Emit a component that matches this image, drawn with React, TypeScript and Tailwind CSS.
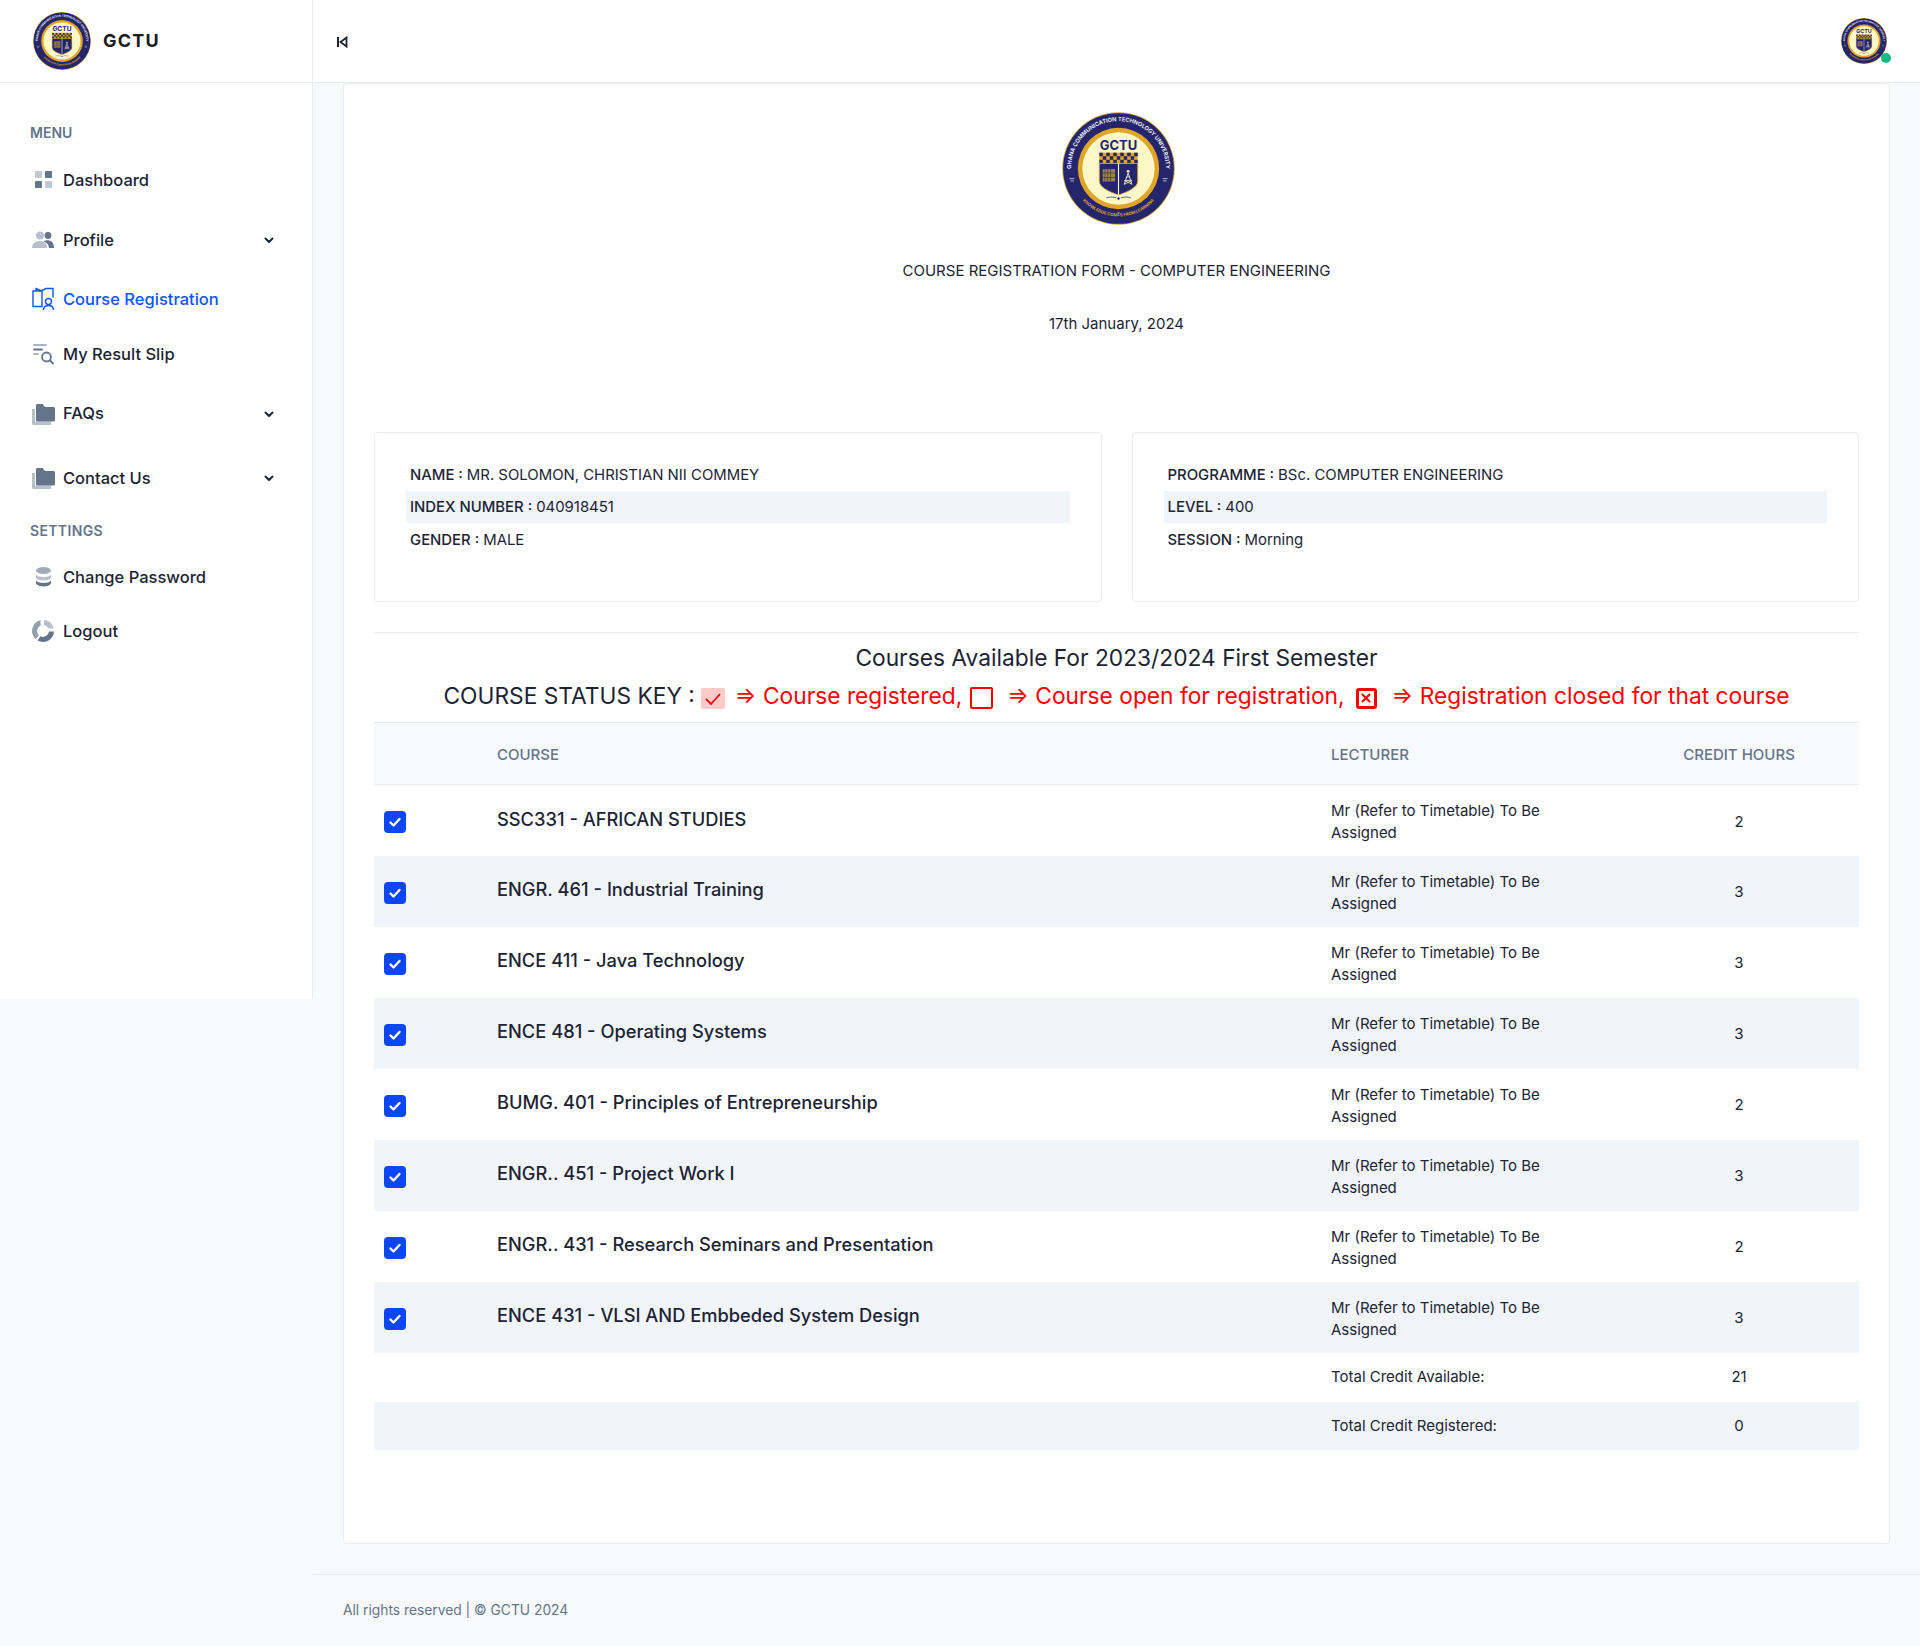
import React, { useId } from 'react';

const courses = [
  { name: 'SSC331 - AFRICAN STUDIES', credit: 2 },
  { name: 'ENGR. 461 - Industrial Training', credit: 3 },
  { name: 'ENCE 411 - Java Technology', credit: 3 },
  { name: 'ENCE 481 - Operating Systems', credit: 3 },
  { name: 'BUMG. 401 - Principles of Entrepreneurship', credit: 2 },
  { name: 'ENGR.. 451 - Project Work I', credit: 3 },
  { name: 'ENGR.. 431 - Research Seminars and Presentation', credit: 2 },
  { name: 'ENCE 431 - VLSI AND Embbeded System Design', credit: 3 },
];

const Seal: React.FC<{ className?: string }> = ({ className }) => {
  const id = useId();
  return (
    <svg viewBox="0 0 200 200" className={className}>
      <circle cx="100" cy="100" r="99.500" fill="#c9a23a" />
      <circle cx="100" cy="100" r="98" fill="#24256b" />
      <circle cx="100" cy="100" r="72" fill="#e0a526" />
      <circle cx="100" cy="100" r="64" fill="#fdf8c8" />
      <defs>
        <path id={`${id}top`} d="M 24 136 A 84 84 0 1 1 176 136" />
        <path id={`${id}bot`} d="M 38 158 A 85 85 0 0 0 162 158" />
      </defs>
      <text fill="#fff" fontSize="10" fontFamily="Inter, sans-serif" fontWeight="600">
        <textPath href={`#${id}top`} startOffset="50%" textAnchor="middle">
          GHANA COMMUNICATION TECHNOLOGY UNIVERSITY
        </textPath>
      </text>
      <text fill="#e0a526" fontSize="7.500" fontFamily="Inter, sans-serif" fontWeight="700">
        <textPath href={`#${id}bot`} startOffset="50%" textAnchor="middle">
          KNOWLEDGE COMES FROM LEARNING
        </textPath>
      </text>
      <path d="M13 118 h9 M178 118 h9 M15 122 h6 M179 122 h6" stroke="#fff" strokeWidth="1.500" opacity="0.8" />
      <text x="100" y="67" textAnchor="middle" fill="#24256b" fontSize="23" fontFamily="Inter, sans-serif" fontWeight="700">
        GCTU
      </text>
      <rect x="66" y="72" width="68" height="19" fill="#e0a526" />
      {[0, 1, 2].map((r) =>
        Array.from({ length: 11 }).map((_, c) =>
          (r + c) % 2 === 0 ? <rect key={`${r}-${c}`} x={66 + c * 6.18} y={72 + r * 6.33} width="6.180" height="6.330" fill="#24256b" /> : null
        )
      )}
      <path d="M66 91 H134 V122 C134 134 116 141 100 147 C84 141 66 134 66 122 Z" fill="#24256b" stroke="#e0a526" strokeWidth="1.500" />
      <path d="M100 91 V147" stroke="#fdf8c8" strokeWidth="2" />
      <rect x="72" y="101" width="22" height="22" fill="#c9a23a" opacity="0.75" />
      <path d="M76 101 V123 M81 101 V123 M86 101 V123 M72 108 H94 M72 116 H94" stroke="#24256b" strokeWidth="1" />
      <path d="M117 108 L110 128 M117 108 L124 128 M112.500 121 H121.500 M114.500 115 H119.500 M110 128 L124 121 M124 128 L110 121" stroke="#fdf8c8" strokeWidth="1.500" fill="none" />
      <circle cx="117" cy="105" r="2.500" fill="#fdf8c8" />
      <path d="M78 152 C84 150 90 150 96 152 M104 152 C110 150 116 150 122 152" stroke="#24256b" strokeWidth="1.200" fill="none" />
      <circle cx="100" cy="153" r="2.200" fill="#24256b" />
    </svg>
  );
};

const DashIcon = () => (
  <svg viewBox="0 0 24 24" className="h-6 w-6">
    <rect x="4" y="3" width="7" height="7" rx="0.800" fill="#64748b" opacity="0.4" />
    <rect x="14" y="3" width="7" height="7" rx="0.800" fill="#64748b" />
    <rect x="4" y="13" width="7" height="7" rx="0.800" fill="#64748b" />
    <rect x="14" y="13" width="7" height="7" rx="0.800" fill="#64748b" opacity="0.4" />
  </svg>
);

const PeopleIcon = () => (
  <svg viewBox="0 0 24 24" className="h-6 w-6">
    <circle cx="9" cy="7.500" r="4" fill="#64748b" opacity="0.45" />
    <path d="M1 20c0-4.500 3.500-7 8-7s7 2.500 7 7z" fill="#64748b" opacity="0.45" />
    <circle cx="17" cy="7.500" r="3.400" fill="#64748b" />
    <path d="M12.500 13.200c1.200-.7 2.800-1 4.400-1 3.800 0 6.100 3 6.100 7.800h-5c0-2.800-2-5.500-5.500-6.800z" fill="#64748b" />
  </svg>
);

const BookUserIcon = () => (
  <svg viewBox="0 0 24 24" className="h-6 w-6" fill="none" stroke="#0d55f5" strokeWidth="1.400">
    <path d="M2 4h9v15.500H2z" />
    <path d="M5 4V1.500l6 2.500" />
    <path d="M11 3.500l4-2h7v9" />
    <circle cx="17.500" cy="14.500" r="3" />
    <path d="M12.500 23c0-3 2-4.500 5-4.500s5 1.500 5 4.500" />
  </svg>
);

const SearchListIcon = () => (
  <svg viewBox="0 0 24 24" className="h-6 w-6" fill="none" stroke="#64748b" strokeWidth="1.800" strokeLinecap="round">
    <path d="M3 3h12" opacity="0.55" />
    <path d="M3 7.500h8" />
    <path d="M3 12h4" opacity="0.55" />
    <circle cx="15.500" cy="15" r="4.500" />
    <path d="M19 18.500l3 3" />
  </svg>
);

const FolderIcon = () => (
  <svg viewBox="0 0 24 24" className="h-6 w-6">
    <path d="M1 7h3v12.500h16V23H2.500C1.700 23 1 22.300 1 21.500z" fill="#64748b" opacity="0.45" />
    <path d="M5 3.500C5 2.700 5.700 2 6.500 2h5l2.500 3h8.500c.8 0 1.500.7 1.500 1.500V18c0 .8-.7 1.500-1.500 1.500h-16C5.700 19.500 5 18.800 5 18z" fill="#64748b" />
  </svg>
);

const StackIcon = () => (
  <svg viewBox="0 0 24 24" className="h-6 w-6">
    <ellipse cx="12.500" cy="5.500" rx="7.500" ry="3.500" fill="#64748b" opacity="0.6" />
    <path d="M5 9.500c1.500 1.800 4.500 2.500 7.500 2.500s6-.7 7.500-2.500v3.500c-1.500 1.800-4.500 2.500-7.500 2.500S6.500 14.800 5 13z" fill="#64748b" opacity="0.45" />
    <path d="M5 15.500c1.500 1.800 4.500 2.500 7.500 2.500s6-.7 7.500-2.500v3c-1 2-4.500 3-7.500 3s-6.500-1-7.500-3z" fill="#64748b" />
  </svg>
);

const LogoutIcon = () => (
  <svg viewBox="0 0 24 24" className="h-6 w-6">
    <path d="M9.500 1.300A11 11 0 0 0 4.500 20l3.500-3.500a6 6 0 0 1 1.500-9.800z" fill="#64748b" opacity="0.7" />
    <path d="M13 1.100a11 11 0 0 1 9.700 8.400h-5.300A6 6 0 0 0 13 6.100z" fill="#64748b" opacity="0.45" />
    <path d="M23 12.500A11 11 0 0 1 6.500 21.500l3-4.200a6 6 0 0 0 8.500-4.800z" fill="#64748b" />
  </svg>
);

const Chevron = () => (
  <svg viewBox="0 0 10 10" className="h-[10px] w-[10px]" fill="none" stroke="#1c2434" strokeWidth="2" strokeLinecap="round" strokeLinejoin="round">
    <path d="M1.500 3.500L5 7l3.500-3.500" />
  </svg>
);

const NavItem: React.FC<{ icon: React.ReactNode; label: string; active?: boolean; chevron?: boolean; className: string }> = ({
  icon,
  label,
  active,
  chevron,
  className,
}) => (
  <div className={`flex items-center pl-[31px] pr-[38px] ${className}`}>
    <span className="flex w-[32px] shrink-0">{icon}</span>
    <span className={`flex-1 text-[16.5px] font-medium ${active ? 'text-[#0d55f5]' : 'text-[#1c2434]'}`}>{label}</span>
    {chevron && <Chevron />}
  </div>
);

const Sidebar = () => (
  <aside className="h-[999px] w-[313px] shrink-0 border-r border-[#e8ecf3] bg-white">
    <div className="flex h-[83px] items-center gap-3 border-b border-[#e8ecf3] pl-[33px]">
      <Seal className="h-[58px] w-[58px]" />
      <span className="text-lg font-bold tracking-[0.07em] text-[#1c1c1c]">GCTU</span>
    </div>
    <div className="flex h-[67px] items-center pl-[30px] pt-[33px]">
      <span className="text-sm font-semibold text-[#64748b]">MENU</span>
    </div>
    <NavItem icon={<DashIcon />} label="Dashboard" className="h-[60px]" />
    <NavItem icon={<PeopleIcon />} label="Profile" chevron className="h-[60px]" />
    <NavItem icon={<BookUserIcon />} label="Course Registration" active className="h-[58px]" />
    <NavItem icon={<SearchListIcon />} label="My Result Slip" className="h-[52px]" />
    <NavItem icon={<FolderIcon />} label="FAQs" chevron className="h-[67px]" />
    <NavItem icon={<FolderIcon />} label="Contact Us" chevron className="h-[62px]" />
    <div className="flex h-[40px] items-center pl-[30px] pt-[4px]">
      <span className="text-sm font-semibold tracking-wide text-[#64748b]">SETTINGS</span>
    </div>
    <NavItem icon={<StackIcon />} label="Change Password" className="h-[56px]" />
    <NavItem icon={<LogoutIcon />} label="Logout" className="h-[52px]" />
  </aside>
);

const InfoCard: React.FC<{ rows: [string, string][] }> = ({ rows }) => (
  <div className="h-[170px] flex-1 rounded border border-[#e8ecf3] bg-white px-[31px] pt-[26px]">
    {rows.map(([k, v], i) => (
      <div
        key={k}
        className={`flex items-center px-[4px] text-[14.9px] text-[#1c2434] ${i === 1 ? 'bg-[#f1f4f9]' : ''} ${i === 2 ? 'h-[34px]' : 'h-[32px]'}`}
      >
        <span className="font-medium">{k}&nbsp;:&nbsp;</span>
        <span>{v}</span>
      </div>
    ))}
  </div>
);

const RowCheck = () => (
  <span className="flex h-[22px] w-[22px] items-center justify-center rounded-[4px] bg-[#0d47f5]">
    <svg viewBox="0 0 16 16" className="h-[16px] w-[16px]" fill="none" stroke="#fff" strokeWidth="2.400" strokeLinecap="round" strokeLinejoin="round">
      <path d="M3.500 8.500l3 3 6-6.500" />
    </svg>
  </span>
);

const StatusKey = () => (
  <div className="flex h-[37px] items-center justify-center pt-[1px] text-[22.75px] text-[#1c2434]">
    <span>COURSE STATUS KEY :</span>
    <span className="ml-[6px] flex h-[21px] w-[24px] translate-y-[2px] items-center justify-center rounded-[2px] bg-[#fecaca]">
      <svg viewBox="0 0 24 21" className="h-[21px] w-[24px]" fill="none" stroke="#ff0000" strokeWidth="1.800">
        <path d="M5 11l5 5 9-10" />
      </svg>
    </span>
    <span className="ml-[10px] text-[#ff0000]">⇒ Course registered,</span>
    <span className="ml-[8px] h-[22px] w-[23px] translate-y-[2px] rounded-[2px] border-2 border-[#ff0000]" />
    <span className="ml-[14px] text-[#ff0000]">⇒ Course open for registration,</span>
    <span className="ml-[11px] flex h-[21px] w-[21px] translate-y-[2px] items-center justify-center rounded-[3px] border-[3px] border-[#ff0000]">
      <svg viewBox="0 0 10 10" className="h-[10px] w-[10px]" fill="none" stroke="#ff0000" strokeWidth="2.200">
        <path d="M1 1l8 8M9 1l-8 8" />
      </svg>
    </span>
    <span className="ml-[15px] text-[#ff0000]">⇒ Registration closed for that course</span>
  </div>
);

const CourseTable = () => (
  <table className="w-full table-fixed border-collapse">
    <colgroup>
      <col className="w-[123px]" />
      <col className="w-[834px]" />
      <col className="w-[290px]" />
      <col />
    </colgroup>
    <thead>
      <tr className="h-[62px] border-y border-[#e8ecf3] bg-[#f8f9fb] text-left text-[15px] text-[#64748b]">
        <th />
        <th className="pt-[3px] font-medium">COURSE</th>
        <th className="pt-[3px] font-medium">LECTURER</th>
        <th className="pr-[2px] pt-[3px] text-center font-medium">CREDIT HOURS</th>
      </tr>
    </thead>
    <tbody>
      {courses.map((c, i) => (
        <tr key={c.name} className={`h-[71px] ${i % 2 === 1 ? 'bg-[#f1f4f9]' : 'bg-white'}`}>
          <td className="pl-[10px] pt-[4px]">
            <RowCheck />
          </td>
          <td className="pb-[2px] text-[18.3px] font-medium text-[#1c2434]">{c.name}</td>
          <td className="pr-[60px] pt-[3px] text-[15px] leading-[22px] text-[#1c2434]">Mr (Refer to Timetable) To Be Assigned</td>
          <td className="pr-[2px] pt-[3px] text-center text-[15px] text-[#1c2434]">{c.credit}</td>
        </tr>
      ))}
      <tr className="h-[49px] bg-white text-[15px] text-[#1c2434]">
        <td />
        <td />
        <td className="pt-[1px]">Total Credit Available:</td>
        <td className="pr-[2px] pt-[1px] text-center">21</td>
      </tr>
      <tr className="h-[48px] bg-[#f1f4f9] text-[15px] text-[#1c2434]">
        <td />
        <td />
        <td className="pt-[1px]">Total Credit Registered:</td>
        <td className="pr-[2px] pt-[1px] text-center">0</td>
      </tr>
    </tbody>
  </table>
);

export default function App() {
  return (
    <div className="flex h-[1646px] overflow-hidden bg-[#f8f9fb] font-['Inter',sans-serif]">
      <Sidebar />
      <div className="flex min-w-0 flex-1 flex-col">
        <header className="flex h-[83px] shrink-0 items-center justify-between border-b border-[#e8ecf3] bg-white pl-[23px] pr-[33px]">
          <svg viewBox="0 0 12 12" className="mt-[2px] h-[12px] w-[12px]" fill="#1c2434">
            <rect x="1" y="1" width="2" height="10" />
            <path d="M10.500 1.500v9L4.500 6z" fill="none" stroke="#1c2434" strokeWidth="1.800" />
          </svg>
          <div className="relative mt-[-1px]">
            <Seal className="h-[46px] w-[46px]" />
            <span className="absolute bottom-[1px] right-[-4px] h-[10px] w-[10px] rounded-full bg-[#10b981]" />
          </div>
        </header>
        <main className="px-[30px]">
          <div className="h-[1461px] rounded border border-[#e8ecf3] bg-white px-[30px] pt-[28px]">
            <div className="flex flex-col items-center text-[15px] text-[#1c2434]">
              <Seal className="ml-[3px] h-[113px] w-[113px]" />
              <p className="mt-[35px]">COURSE REGISTRATION FORM - COMPUTER ENGINEERING</p>
              <p className="mt-[30px]">17th January, 2024</p>
            </div>
            <div className="mt-[97px] flex gap-[30px]">
              <InfoCard
                rows={[
                  ['NAME', 'MR. SOLOMON, CHRISTIAN NII COMMEY'],
                  ['INDEX NUMBER', '040918451'],
                  ['GENDER', 'MALE'],
                ]}
              />
              <InfoCard
                rows={[
                  ['PROGRAMME', 'BSc. COMPUTER ENGINEERING'],
                  ['LEVEL', '400'],
                  ['SESSION', 'Morning'],
                ]}
              />
            </div>
            <div className="mt-[30px] border-t border-[#e8ecf3] pt-[7px]">
              <h2 className="flex h-[37px] items-center justify-center text-[22.75px] text-[#1c2434]">Courses Available For 2023/2024 First Semester</h2>
              <StatusKey />
              <div className="mt-[8px]">
                <CourseTable />
              </div>
            </div>
          </div>
        </main>
        <footer className="mt-[30px] flex h-[72px] items-center border-t border-[#e8ecf3] pl-[30px] text-[13.8px] text-[#64748b]">
          All rights reserved | © GCTU 2024
        </footer>
      </div>
    </div>
  );
}
